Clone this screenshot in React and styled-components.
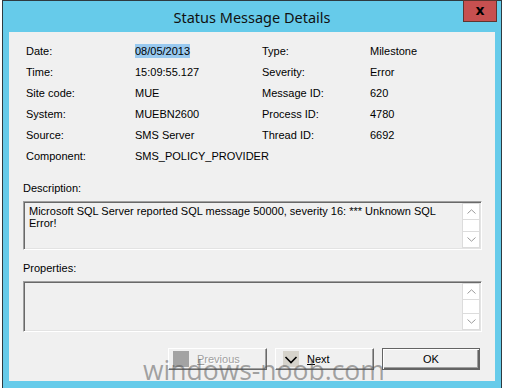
import React from 'react';
import styled, { createGlobalStyle } from 'styled-components';

const GlobalStyle = createGlobalStyle`
  html, body {
    margin: 0;
    padding: 0;
    background: #ffffff;
  }
  body {
    font-family: "Liberation Sans", Arial, sans-serif;
    font-size: 11px;
    color: #000;
  }
`;

const leftFields = [
  { label: 'Date:', value: '08/05/2013', selected: true },
  { label: 'Time:', value: '15:09:55.127' },
  { label: 'Site code:', value: 'MUE' },
  { label: 'System:', value: 'MUEBN2600' },
  { label: 'Source:', value: 'SMS Server' },
  { label: 'Component:', value: 'SMS_POLICY_PROVIDER' },
];

const rightFields = [
  { label: 'Type:', value: 'Milestone' },
  { label: 'Severity:', value: 'Error' },
  { label: 'Message ID:', value: '620' },
  { label: 'Process ID:', value: '4780' },
  { label: 'Thread ID:', value: '6692' },
];

const ChevronUp = () => (
  <svg width="9" height="5" viewBox="0 0 9 5">
    <path d="M0.5 4.5 L4.5 0.8 L8.5 4.5" fill="none" stroke="#9a9a9a" strokeWidth="1" />
  </svg>
);

const ChevronDown = () => (
  <svg width="9" height="5" viewBox="0 0 9 5">
    <path d="M0.5 0.5 L4.5 4.2 L8.5 0.5" fill="none" stroke="#9a9a9a" strokeWidth="1" />
  </svg>
);

const ScrollBar = () => (
  <Scroll>
    <ScrollButton><ChevronUp /></ScrollButton>
    <ScrollTrack />
    <ScrollButton><ChevronDown /></ScrollButton>
  </Scroll>
);

const App = () => {
  return (
    <>
      <GlobalStyle />
      <Window>
        <TitleBar>
          <Title>Status Message Details</Title>
          <CloseButton>x</CloseButton>
        </TitleBar>
        <Client>
          <Fields>
            <FieldGrid $labelWidth={109}>
              {leftFields.map((f) => (
                <React.Fragment key={f.label}>
                  <Label>{f.label}</Label>
                  <Value>{f.selected ? <Selected>{f.value}</Selected> : f.value}</Value>
                </React.Fragment>
              ))}
            </FieldGrid>
            <FieldGrid $labelWidth={108}>
              {rightFields.map((f) => (
                <React.Fragment key={f.label}>
                  <Label>{f.label}</Label>
                  <Value>{f.value}</Value>
                </React.Fragment>
              ))}
            </FieldGrid>
          </Fields>

          <Section $top={16}>
            <SectionLabel>Description:</SectionLabel>
            <TextBox $height={49}>
              <TextContent>
                Microsoft SQL Server reported SQL message 50000, severity 16: *** Unknown SQL Error!
              </TextContent>
              <ScrollBar />
            </TextBox>
          </Section>

          <Section $top={12}>
            <SectionLabel>Properties:</SectionLabel>
            <TextBox $height={51}>
              <TextContent />
              <ScrollBar />
            </TextBox>
          </Section>

          <ButtonRow>
            <DialogButton $inset={4} disabled>
              <IconBox $bg="#a3a3a3" />
              <ButtonText $disabled><u>P</u>revious</ButtonText>
            </DialogButton>
            <DialogButton $inset={7}>
              <IconBox $bg="#d6d3cb">
                <svg width="16" height="16" viewBox="0 0 16 16">
                  <path d="M2.5 6 L8 11.5 L13.5 6" fill="none" stroke="#000" strokeWidth="1.6" />
                </svg>
              </IconBox>
              <ButtonText><u>N</u>ext</ButtonText>
            </DialogButton>
            <DefaultButton>OK</DefaultButton>
          </ButtonRow>

          <Watermark>windows-noob.com</Watermark>
        </Client>
      </Window>
    </>
  );
};

export default App;

// STYLE

const Window = styled.div`
  box-sizing: border-box;
  position: relative;
  width: 500px;
  margin-left: 2px;
  border: 1px solid #2e3a40;
  border-bottom: none;
  background: #66cbea;
  padding: 0 6px 12px 6px;
`;

const TitleBar = styled.div`
  height: 31px;
  display: flex;
  align-items: center;
  justify-content: center;
`;

const Title = styled.div`
  font-family: "Noto Sans", "Open Sans", sans-serif;
  font-size: 14.5px;
  color: #111;
  margin-top: 1px;
`;

const CloseButton = styled.div`
  position: absolute;
  top: -1px;
  right: 4px;
  width: 34px;
  height: 22px;
  box-sizing: border-box;
  background: #c75050;
  border: 1px solid #5e3530;
  display: flex;
  align-items: center;
  justify-content: center;
  font-family: "DejaVu Sans", sans-serif;
  font-weight: bold;
  font-size: 14px;
  line-height: 1;
  color: #000;
  padding-bottom: 3px;
`;

const Client = styled.div`
  position: relative;
  overflow: hidden;
  height: 349px;
  box-sizing: border-box;
  background: #f0f0f0;
  padding-top: 8px;
  display: flex;
  flex-direction: column;
`;

const Fields = styled.div`
  display: grid;
  grid-template-columns: 236px 1fr;
  padding-left: 17px;
`;

const FieldGrid = styled.div`
  display: grid;
  grid-template-columns: ${(p) => p.$labelWidth}px 1fr;
  grid-auto-rows: 21px;
  align-items: center;
`;

const Label = styled.div`
  white-space: nowrap;
`;

const Value = styled.div`
  white-space: nowrap;
`;

const Selected = styled.span`
  background: #99c9ef;
  padding: 1px 0;
`;

const Section = styled.div`
  margin-top: ${(p) => p.$top}px;
  padding: 0 13px 0 14px;
`;

const SectionLabel = styled.div`
  line-height: 13px;
  margin-bottom: 6px;
`;

const TextBox = styled.div`
  box-sizing: border-box;
  height: ${(p) => p.$height}px;
  display: flex;
  background: #f0f0f0;
  border: 1px solid;
  border-color: #a0a0a0 #ffffff #ffffff #a0a0a0;
  box-shadow: inset 1px 1px 0 #696969, inset -1px -1px 0 #e3e3e3;
  padding: 1px 1px 1px 1px;
`;

const TextContent = styled.div`
  flex: 1;
  padding: 2px 0 0 4px;
  line-height: 12px;
  padding-right: 20px;
`;

const Scroll = styled.div`
  width: 16px;
  display: flex;
  flex-direction: column;
  background: #fff;
  border: 1px solid #dcdcdc;
`;

const ScrollButton = styled.div`
  height: 15px;
  display: flex;
  align-items: center;
  justify-content: center;
  background: #fff;
  border-bottom: 1px solid #dcdcdc;

  &:last-child {
    border-bottom: none;
    border-top: 1px solid #dcdcdc;
  }
`;

const ScrollTrack = styled.div`
  flex: 1;
  background: #fff;
`;

const ButtonRow = styled.div`
  margin-top: 16px;
  display: flex;
  justify-content: flex-end;
  gap: 8px;
  padding-right: 15px;
`;

const DialogButton = styled.button`
  box-sizing: border-box;
  width: 99px;
  height: 22px;
  display: flex;
  align-items: center;
  gap: 8px;
  padding: 0 0 0 ${(p) => p.$inset}px;
  background: #f0f0f0;
  border: 1px solid;
  border-color: #ffffff #696969 #696969 #ffffff;
  box-shadow: inset -1px -1px 0 #a0a0a0;
  font-family: "Liberation Sans", Arial, sans-serif;
  font-size: 11px;
  color: #000;
`;

const IconBox = styled.span`
  width: 16px;
  height: 16px;
  background: ${(p) => p.$bg};
  display: block;

  svg {
    display: block;
  }
`;

const ButtonText = styled.span`
  color: ${(p) => (p.$disabled ? '#a0a0a0' : '#000')};
  text-shadow: ${(p) => (p.$disabled ? '1px 1px 0 #ffffff' : 'none')};

  u {
    text-decoration-thickness: 1px;
  }
`;

const DefaultButton = styled.button`
  box-sizing: border-box;
  width: 98px;
  height: 22px;
  background: #f0f0f0;
  border: 1px solid #646464;
  box-shadow: inset 1px 1px 0 #ffffff, inset -1px -1px 0 #646464, inset -2px -2px 0 #a0a0a0;
  font-family: "Liberation Sans", Arial, sans-serif;
  font-size: 11px;
  color: #000;
`;

const Watermark = styled.div`
  position: absolute;
  left: 134px;
  top: 325px;
  font-family: "Open Sans", sans-serif;
  font-size: 26.5px;
  line-height: 26.5px;
  color: rgba(80, 80, 80, 0.5);
  white-space: nowrap;
  pointer-events: none;
`;
